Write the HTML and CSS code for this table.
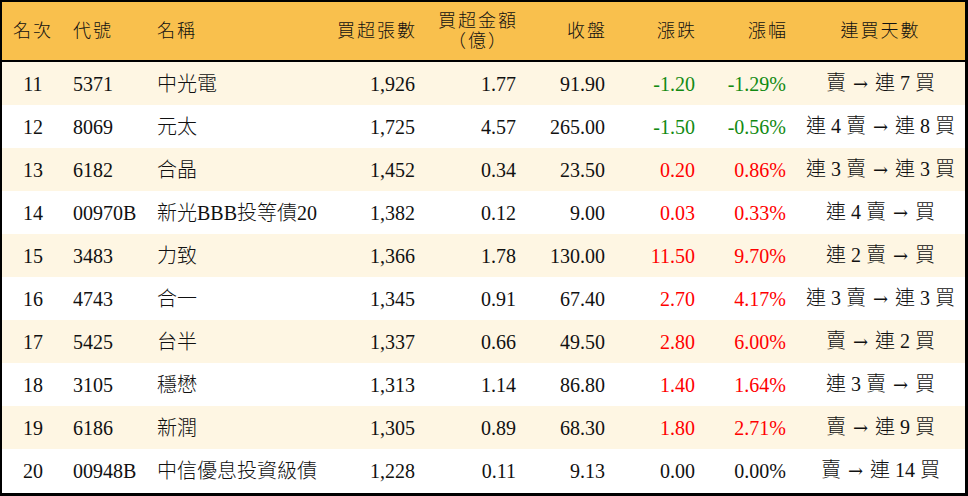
FILE: index.html
```html
<!DOCTYPE html>
<html lang="zh-Hant">
<head>
<meta charset="utf-8">
<link rel="stylesheet" href="styles.css">
</head>
<body>
<div class="frame">
<table class="rank">
<colgroup>
<col class="c1"><col class="c2"><col class="c3"><col class="c4"><col class="c5"><col class="c6"><col class="c7"><col class="c8"><col class="c9">
</colgroup>
<thead>
<tr>
<th class="ctr">名次</th>
<th class="lft">代號</th>
<th class="lft">名稱</th>
<th class="rgt">買超張數</th>
<th class="rgt"><span class="two">買超金額<br>（億）</span></th>
<th class="rgt">收盤</th>
<th class="rgt">漲跌</th>
<th class="rgt">漲幅</th>
<th class="ctr">連買天數</th>
</tr>
</thead>
<tbody>
<tr class="odd"><td class="ctr">11</td><td class="lft">5371</td><td class="lft cjk">中光電</td><td class="rgt">1,926</td><td class="rgt">1.77</td><td class="rgt">91.90</td><td class="rgt dn">-1.20</td><td class="rgt dn">-1.29%</td><td class="ctr cjk">賣 <span class="arr">→</span> 連 7 買</td></tr>
<tr><td class="ctr">12</td><td class="lft">8069</td><td class="lft cjk">元太</td><td class="rgt">1,725</td><td class="rgt">4.57</td><td class="rgt">265.00</td><td class="rgt dn">-1.50</td><td class="rgt dn">-0.56%</td><td class="ctr cjk">連 4 賣 <span class="arr">→</span> 連 8 買</td></tr>
<tr class="odd"><td class="ctr">13</td><td class="lft">6182</td><td class="lft cjk">合晶</td><td class="rgt">1,452</td><td class="rgt">0.34</td><td class="rgt">23.50</td><td class="rgt up">0.20</td><td class="rgt up">0.86%</td><td class="ctr cjk">連 3 賣 <span class="arr">→</span> 連 3 買</td></tr>
<tr><td class="ctr">14</td><td class="lft">00970B</td><td class="lft cjk">新光BBB投等債20</td><td class="rgt">1,382</td><td class="rgt">0.12</td><td class="rgt">9.00</td><td class="rgt up">0.03</td><td class="rgt up">0.33%</td><td class="ctr cjk">連 4 賣 <span class="arr">→</span> 買</td></tr>
<tr class="odd"><td class="ctr">15</td><td class="lft">3483</td><td class="lft cjk">力致</td><td class="rgt">1,366</td><td class="rgt">1.78</td><td class="rgt">130.00</td><td class="rgt up">11.50</td><td class="rgt up">9.70%</td><td class="ctr cjk">連 2 賣 <span class="arr">→</span> 買</td></tr>
<tr><td class="ctr">16</td><td class="lft">4743</td><td class="lft cjk">合一</td><td class="rgt">1,345</td><td class="rgt">0.91</td><td class="rgt">67.40</td><td class="rgt up">2.70</td><td class="rgt up">4.17%</td><td class="ctr cjk">連 3 賣 <span class="arr">→</span> 連 3 買</td></tr>
<tr class="odd"><td class="ctr">17</td><td class="lft">5425</td><td class="lft cjk">台半</td><td class="rgt">1,337</td><td class="rgt">0.66</td><td class="rgt">49.50</td><td class="rgt up">2.80</td><td class="rgt up">6.00%</td><td class="ctr cjk">賣 <span class="arr">→</span> 連 2 買</td></tr>
<tr><td class="ctr">18</td><td class="lft">3105</td><td class="lft cjk">穩懋</td><td class="rgt">1,313</td><td class="rgt">1.14</td><td class="rgt">86.80</td><td class="rgt up">1.40</td><td class="rgt up">1.64%</td><td class="ctr cjk">連 3 賣 <span class="arr">→</span> 買</td></tr>
<tr class="odd"><td class="ctr">19</td><td class="lft">6186</td><td class="lft cjk">新潤</td><td class="rgt">1,305</td><td class="rgt">0.89</td><td class="rgt">68.30</td><td class="rgt up">1.80</td><td class="rgt up">2.71%</td><td class="ctr cjk">賣 <span class="arr">→</span> 連 9 買</td></tr>
<tr><td class="ctr">20</td><td class="lft">00948B</td><td class="lft cjk">中信優息投資級債</td><td class="rgt">1,228</td><td class="rgt">0.11</td><td class="rgt">9.13</td><td class="rgt">0.00</td><td class="rgt">0.00%</td><td class="ctr cjk">賣 <span class="arr">→</span> 連 14 買</td></tr>
</tbody>
</table>
</div>
</body>
</html>
```
FILE: styles.css
```css
html, body {
  margin: 0;
  padding: 0;
  background: #ffffff;
}
.frame {
  box-sizing: border-box;
  width: 968px;
  height: 496px;
  border-style: solid;
  border-color: #000000;
  border-width: 2px 3px 3px 2px;
  overflow: hidden;
  font-family: "Liberation Serif", "Noto Sans CJK TC", serif;
  font-size: 20px;
  color: #111111;
}
.rank {
  width: 963px;
  border-collapse: collapse;
  table-layout: fixed;
}
.c1 { width: 62px; }
.c2 { width: 84px; }
.c3 { width: 182px; }
.c4 { width: 95px; }
.c5 { width: 101px; }
.c6 { width: 89px; }
.c7 { width: 90px; }
.c8 { width: 91px; }
.c9 { width: 169px; }
thead tr {
  background: #f9c04d;
  height: 59px;
  border-bottom: 2px solid #000000;
}
th {
  font-weight: 300;
  padding: 0;
  line-height: 20px;
  font-size: 18px;
  letter-spacing: 2px;
}
td {
  padding: 0;
  height: 43px;
  line-height: 20px;
  white-space: nowrap;
}
.cjk {
  font-weight: 300;
}
tbody tr {
  background: #ffffff;
}
tbody tr.odd {
  background: #fef6e3;
}
.ctr { text-align: center; }
.lft { text-align: left; padding-left: 9px; }
.rgt { text-align: right; padding-right: 10px; }
th.rgt { padding-right: 8px; }
.two {
  display: inline-block;
  text-align: center;
}
.arr {
  font-family: "DejaVu Serif", serif;
  font-weight: normal;
  font-size: 18px;
  margin: 0 2px;
}
.dn { color: #128a12; }
.up { color: #ff0000; }
```
